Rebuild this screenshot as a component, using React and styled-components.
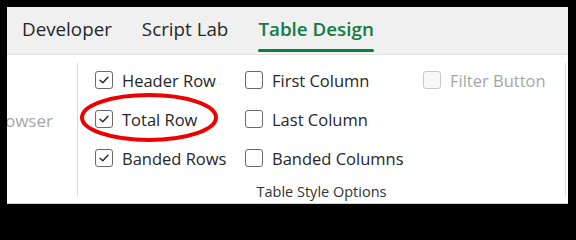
import React from 'react';
import styled, { createGlobalStyle } from 'styled-components';

const GlobalStyle = createGlobalStyle({
  'html, body': {
    margin: 0,
    padding: 0,
    background: '#000',
    overflow: 'hidden'
  },
  body: {
    fontFamily: '"Open Sans", "Noto Sans", sans-serif'
  }
});

const Frame = styled.div({
  width: '576px',
  height: '212px',
  boxSizing: 'border-box',
  padding: '7px 8px 8px 7px',
  background: '#000'
});

const Panel = styled.div({
  position: 'relative',
  height: '100%',
  display: 'flex',
  flexDirection: 'column',
  background: '#fff',
  overflow: 'hidden'
});

const TabBar = styled.div({
  height: '48px',
  flexShrink: 0,
  boxSizing: 'border-box',
  display: 'flex',
  gap: '30px',
  paddingLeft: '15px',
  background: '#f0f0f0',
  borderBottom: '1px solid #e3e3e3'
});

const Tab = styled.div(({ active }) => ({
  display: 'flex',
  flexDirection: 'column',
  paddingTop: '10px',
  fontSize: '18.8px',
  lineHeight: '25px',
  whiteSpace: 'nowrap',
  color: active ? '#107c41' : '#262626',
  fontWeight: active ? 600 : 400,
  '&::after': {
    content: '""',
    height: '3px',
    marginTop: '7px',
    borderRadius: '2px',
    background: active ? '#107c41' : 'transparent'
  }
}));

const Ribbon = styled.div({
  flex: 1,
  display: 'flex',
  boxSizing: 'border-box',
  paddingTop: '8px',
  borderBottom: '1px solid #d4d4d4'
});

const Group = styled.div(({ width }) => ({
  width: `${width}px`,
  flexShrink: 0,
  display: 'flex',
  flexDirection: 'column',
  marginBottom: '7px',
  borderRight: '1px solid #d8d8d8'
}));

// the "Browser" button of the previous group is cut by the window edge
const ClippedLabel = styled.div({
  width: '46px',
  marginTop: '46px',
  overflow: 'hidden',
  whiteSpace: 'nowrap',
  textIndent: '-20px',
  fontSize: '17px',
  color: '#a6a6a6'
});

const OptionsGrid = styled.div({
  display: 'grid',
  gridTemplateColumns: '150px 178px 1fr',
  gridAutoRows: '28px',
  rowGap: '11px',
  padding: '3px 0 0 17px'
});

const Option = styled.label(({ disabled }) => ({
  display: 'flex',
  alignItems: 'center',
  gap: '9px',
  fontSize: '16.5px',
  color: disabled ? '#a6a6a6' : '#262626',
  whiteSpace: 'nowrap'
}));

const Box = styled.span(({ disabled }) => ({
  width: '18px',
  height: '18px',
  boxSizing: 'border-box',
  flexShrink: 0,
  display: 'flex',
  alignItems: 'center',
  justifyContent: 'center',
  border: `1.5px solid ${disabled ? '#c8c8c8' : '#6a6a6a'}`,
  borderRadius: '3px',
  background: disabled ? '#f7f7f7' : '#fff'
}));

const GroupLabel = styled.div({
  marginTop: 'auto',
  marginBottom: '-4px',
  textAlign: 'center',
  fontSize: '14.5px',
  lineHeight: '16px',
  color: '#333'
});

const Highlight = styled.svg({
  position: 'absolute',
  inset: 0,
  width: '100%',
  height: '100%',
  pointerEvents: 'none'
});

const Check = () => (
  <svg width="10" height="8" viewBox="0 0 10 8">
    <path d="M1 4.2 L3.8 6.8 L9 1.2" fill="none" stroke="#262626" strokeWidth="1.4" strokeLinecap="round" strokeLinejoin="round" />
  </svg>
);

const CheckOption = ({ label, checked, disabled }) => (
  <Option disabled={disabled}>
    <Box disabled={disabled}>{checked && <Check />}</Box>
    {label}
  </Option>
);

const options = [
  { label: 'Header Row', checked: true },
  { label: 'First Column' },
  { label: 'Filter Button', disabled: true },
  { label: 'Total Row', checked: true },
  { label: 'Last Column' },
  null,
  { label: 'Banded Rows', checked: true },
  { label: 'Banded Columns' },
  null
];

const App = () => (
  <Frame>
    <GlobalStyle />
    <Panel>
      <TabBar>
        <Tab>Developer</Tab>
        <Tab>Script Lab</Tab>
        <Tab active>Table Design</Tab>
      </TabBar>
      <Ribbon>
        <Group width={70}>
          <ClippedLabel>Browser</ClippedLabel>
        </Group>
        <Group width={487}>
          <OptionsGrid>
            {options.map((o, i) => (o ? <CheckOption key={i} {...o} /> : <span key={i} />))}
          </OptionsGrid>
          <GroupLabel>Table Style Options</GroupLabel>
        </Group>
      </Ribbon>
      <Highlight viewBox="0 0 561 197">
        <ellipse cx="142" cy="110.5" rx="67" ry="22.5" fill="none" stroke="#ee0000" strokeWidth="4" />
      </Highlight>
    </Panel>
  </Frame>
);

export default App;
